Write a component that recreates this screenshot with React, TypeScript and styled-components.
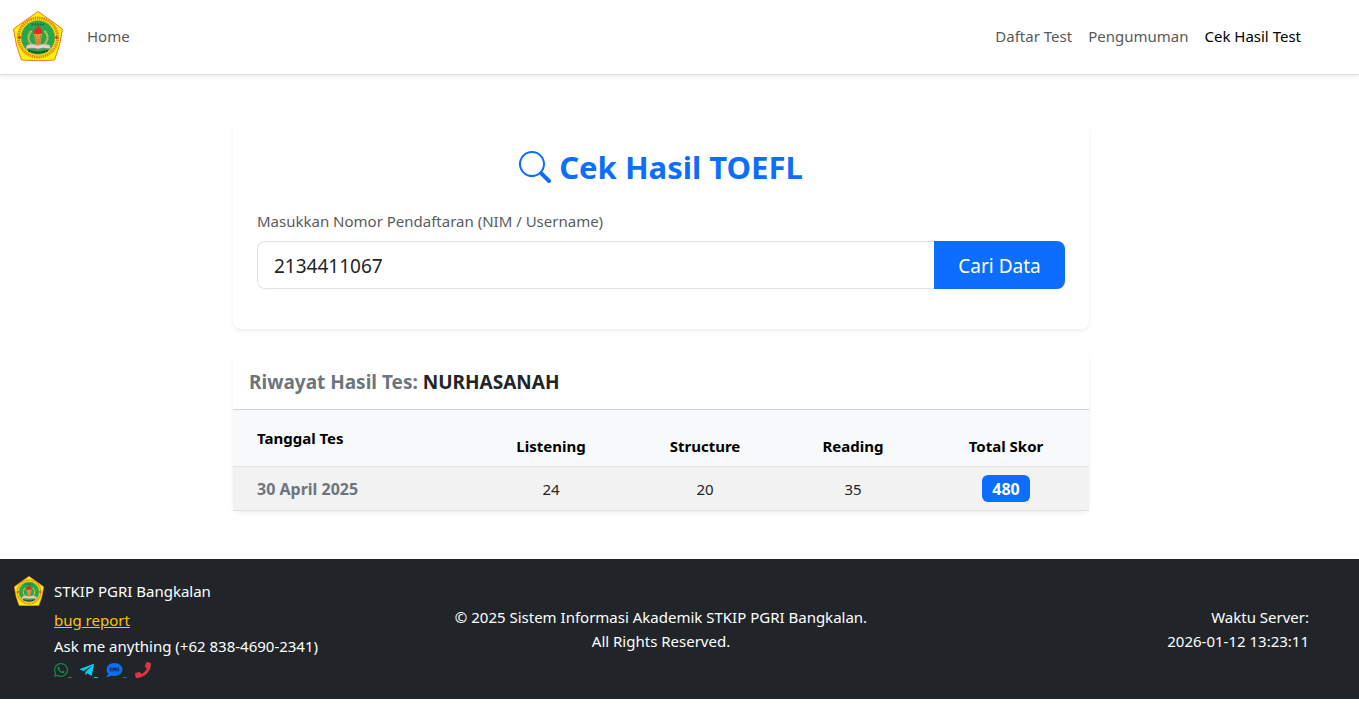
import React, { useState } from 'react';
import styled, { createGlobalStyle } from 'styled-components';
import { BsSearch } from 'react-icons/bs';
import { FaPhone, FaSms, FaTelegramPlane, FaWhatsapp } from 'react-icons/fa';

const GlobalStyle = createGlobalStyle`
  *, *::before, *::after { box-sizing: border-box; }
  body {
    margin: 0;
    background: #fff;
    color: #212529;
    font-family: 'Segoe UI', 'Noto Sans', 'Liberation Sans', sans-serif;
    font-size: 15px;
    line-height: 24px;
  }
`;

const Navbar = styled.nav`
  display: flex;
  align-items: center;
  min-height: 75px;
  padding: 0 58px 2px 13px;
  background: #fff;
  border-bottom: 1px solid #dee2e6;
  box-shadow: 0 2px 4px rgba(0, 0, 0, 0.075);
`;

const Brand = styled.a`
  display: flex;
  margin-right: 24px;
`;

const NavGroup = styled.div`
  display: flex;
  gap: 16px;
  margin-left: auto;
`;

const NavLink = styled.a<{ $active?: boolean }>`
  color: ${(p) => (p.$active ? '#000' : '#595959')};
  text-decoration: none;
`;

const Main = styled.main`
  display: flex;
  flex-direction: column;
  gap: 24px;
  width: calc(100% - 37px);
  padding: 48px 12px;
`;

const Card = styled.section`
  width: 100%;
  max-width: 856px;
  margin: 0 auto;
  border-radius: 8px;
  background: #fff;
  box-shadow: 0 2px 4px rgba(0, 0, 0, 0.075);
`;

const SearchForm = styled.form`
  padding: 24px 24px 40px;
`;

const Title = styled.h1`
  display: flex;
  align-items: center;
  justify-content: center;
  gap: 8px;
  margin: 0 0 22px;
  color: #0d6efd;
  font-size: 31px;
  font-weight: 700;
  line-height: 40px;
`;

const Label = styled.label`
  display: block;
  margin-bottom: 8px;
  color: #595c5f;
`;

const InputGroup = styled.div`
  display: flex;
  height: 48px;
`;

const TextInput = styled.input`
  flex: 1;
  min-width: 0;
  padding: 2px 16px 0;
  border: 1px solid #dee2e6;
  border-right: 0;
  border-radius: 8px 0 0 8px;
  background: #fff;
  color: #212529;
  font: inherit;
  font-size: 19px;
`;

const SearchButton = styled.button`
  width: 131px;
  padding: 2px 0 0;
  border: 0;
  border-radius: 0 8px 8px 0;
  background: #0d6efd;
  color: #fff;
  font: inherit;
  font-size: 19px;
`;

const ResultTitle = styled.h2`
  margin: 0;
  padding: 17px 16px 15px;
  border-bottom: 1px solid #ced2d5;
  color: #6c757d;
  font-size: 19px;
  font-weight: 700;
  line-height: 24px;
`;

const StudentName = styled.span`
  color: #212529;
`;

const Table = styled.table`
  width: 100%;
  border-collapse: separate;
  border-spacing: 0;
  table-layout: fixed;
`;

const Col = styled.col<{ $width: number }>`
  width: ${(p) => p.$width}px;
`;

const HeadCell = styled.th<{ $first?: boolean }>`
  padding: ${(p) => (p.$first ? '16px 24px' : '8px')};
  border-bottom: 1px solid #dee2e6;
  background: #f8f9fa;
  color: #000;
  font-weight: 700;
  text-align: ${(p) => (p.$first ? 'left' : 'center')};
  vertical-align: bottom;
`;

const Cell = styled.td<{ $first?: boolean }>`
  height: 44px;
  padding: ${(p) => (p.$first ? '0 24px' : '0 8px')};
  border-bottom: 1px solid #dee2e6;
  background: #f2f2f2;
  color: ${(p) => (p.$first ? '#6c757d' : '#212529')};
  font-size: ${(p) => (p.$first ? 16 : 15)}px;
  font-weight: ${(p) => (p.$first ? 700 : 400)};
  text-align: ${(p) => (p.$first ? 'left' : 'center')};
  vertical-align: middle;
`;

const Badge = styled.span`
  display: inline-block;
  padding: 2px 10px 0;
  border-radius: 6px;
  background: #0d6efd;
  color: #fff;
  font-size: 16px;
  font-weight: 700;
  line-height: 25px;
  vertical-align: middle;
`;

const Footer = styled.footer`
  background: #212529;
  color: #fff;
`;

const FooterInner = styled.div`
  display: grid;
  grid-template-columns: 1fr 1fr 1fr;
  align-items: center;
  width: calc(100% - 37px);
  padding: 16px 13px;
`;

const Contact = styled.div`
  display: grid;
  grid-template-columns: 32px 1fr;
  grid-template-rows: 32px 26px 26px 24px;
  column-gap: 9px;
  align-items: center;

  > svg {
    justify-self: center;
  }
`;

const ContactLine = styled.div`
  grid-column: 2;
`;

const BugLink = styled.a`
  color: #ffc107;
`;

const Socials = styled.div`
  display: flex;
  grid-column: 2;
  align-self: start;
  gap: 8px;
  line-height: 22px;
`;

const SocialLink = styled.a<{ $color: string; $iconWidth: number }>`
  color: ${(p) => p.$color};
  white-space: pre;

  svg {
    width: ${(p) => p.$iconWidth}px;
    height: 16px;
    vertical-align: -2px;
  }
`;

const Copyright = styled.div`
  text-align: center;
`;

const ServerTime = styled.div`
  text-align: right;
`;

function Emblem({ size }: { size: number }) {
  return (
    <svg width={size} height={size} viewBox="0 0 100 100" role="img" aria-label="STKIP PGRI Bangkalan">
      <path
        d="M50 1Q76 19 99 36Q95 70 83 98Q50 101 17 98Q5 70 1 36Q24 19 50 1Z"
        fill="#fff200"
        stroke="#e8763c"
        strokeWidth="2"
        strokeLinejoin="round"
      />
      <circle cx="50" cy="53" r="39" fill="none" stroke="#de8420" strokeWidth="6" strokeDasharray="3 1.4" />
      <circle cx="50" cy="53" r="34" fill="#27a84f" stroke="#d8a020" strokeWidth="1" />
      <path d="M37 27h26" stroke="#14682e" strokeWidth="4" strokeDasharray="3 2.5" />
      <path
        d="M37 40C26 51 31 67 46 71M63 40C74 51 69 67 54 71"
        fill="none"
        stroke="#d9c24a"
        strokeWidth="4"
        strokeDasharray="4 1"
      />
      <path d="M42 45h16l-4 24h-8z" fill="#f3a83c" />
      <path d="M50 45v23M45 48l2 18M55 48l-2 18" stroke="#b0602c" strokeWidth="1.5" />
      <path d="M43 46Q38 39 46 35Q51 32 50 29Q57 35 58 40Q60 45 55 46Z" fill="#e52b20" />
      <path d="M28 68Q40 64 50 69Q60 64 73 68L76 76Q60 72 50 76Q40 72 25 76Z" fill="#ecd0cc" stroke="#a58a86" />
      <path d="M31 79Q50 87 70 79" fill="none" stroke="#174823" strokeWidth="4" strokeDasharray="4 1" />
      <path d="M9 53l4-4 4 4-4 4zM83 53l4-4 4 4-4 4z" fill="#d8421c" />
    </svg>
  );
}

const columns = [
  { label: 'Tanggal Tes', width: 242 },
  { label: 'Listening', width: 152 },
  { label: 'Structure', width: 156 },
  { label: 'Reading', width: 140 },
  { label: 'Total Skor', width: 166 },
];

const results = [{ date: '30 April 2025', listening: 24, structure: 20, reading: 35, total: 480 }];

const socials = [
  { name: 'WhatsApp', color: '#198754', icon: <FaWhatsapp />, width: 14, trail: ' ' },
  { name: 'Telegram', color: '#0dcaf0', icon: <FaTelegramPlane />, width: 14, trail: ' ' },
  { name: 'SMS', color: '#0d6efd', icon: <FaSms />, width: 17, trail: ' ' },
  { name: 'Telepon', color: '#dc3545', icon: <FaPhone />, width: 16, trail: '' },
];

export default function App() {
  const [number, setNumber] = useState('2134411067');

  return (
    <>
      <GlobalStyle />
      <Navbar>
        <Brand href="#">
          <Emblem size={50} />
        </Brand>
        <NavLink href="#">Home</NavLink>
        <NavGroup>
          <NavLink href="#daftar">Daftar Test</NavLink>
          <NavLink href="#pengumuman">Pengumuman</NavLink>
          <NavLink href="#hasil" $active>
            Cek Hasil Test
          </NavLink>
        </NavGroup>
      </Navbar>

      <Main>
        <Card>
          <SearchForm onSubmit={(e) => e.preventDefault()}>
            <Title>
              <BsSearch size={32} />
              Cek Hasil TOEFL
            </Title>
            <Label htmlFor="nomor">Masukkan Nomor Pendaftaran (NIM / Username)</Label>
            <InputGroup>
              <TextInput id="nomor" type="text" value={number} onChange={(e) => setNumber(e.target.value)} />
              <SearchButton type="submit">Cari Data</SearchButton>
            </InputGroup>
          </SearchForm>
        </Card>

        <Card>
          <ResultTitle>
            Riwayat Hasil Tes: <StudentName>NURHASANAH</StudentName>
          </ResultTitle>
          <Table>
            <colgroup>
              {columns.map((c) => (
                <Col key={c.label} $width={c.width} />
              ))}
            </colgroup>
            <thead>
              <tr>
                {columns.map((c, i) => (
                  <HeadCell key={c.label} scope="col" $first={i === 0}>
                    {c.label}
                  </HeadCell>
                ))}
              </tr>
            </thead>
            <tbody>
              {results.map((r) => (
                <tr key={r.date}>
                  <Cell $first>{r.date}</Cell>
                  <Cell>{r.listening}</Cell>
                  <Cell>{r.structure}</Cell>
                  <Cell>{r.reading}</Cell>
                  <Cell>
                    <Badge>{r.total}</Badge>
                  </Cell>
                </tr>
              ))}
            </tbody>
          </Table>
        </Card>
      </Main>

      <Footer>
        <FooterInner>
          <Contact>
            <Emblem size={30} />
            <ContactLine>STKIP PGRI Bangkalan</ContactLine>
            <ContactLine>
              <BugLink href="#bug">bug report</BugLink>
            </ContactLine>
            <ContactLine>Ask me anything (+62 838-4690-2341)</ContactLine>
            <Socials>
              {socials.map((s) => (
                <SocialLink
                  key={s.name}
                  href={`#${s.name.toLowerCase()}`}
                  aria-label={s.name}
                  $color={s.color}
                  $iconWidth={s.width}
                >
                  {s.icon}
                  {s.trail}
                </SocialLink>
              ))}
            </Socials>
          </Contact>
          <Copyright>
            © 2025 Sistem Informasi Akademik STKIP PGRI Bangkalan.
            <br />
            All Rights Reserved.
          </Copyright>
          <ServerTime>
            Waktu Server:
            <br />
            2026-01-12 13:23:11
          </ServerTime>
        </FooterInner>
      </Footer>
    </>
  );
}
